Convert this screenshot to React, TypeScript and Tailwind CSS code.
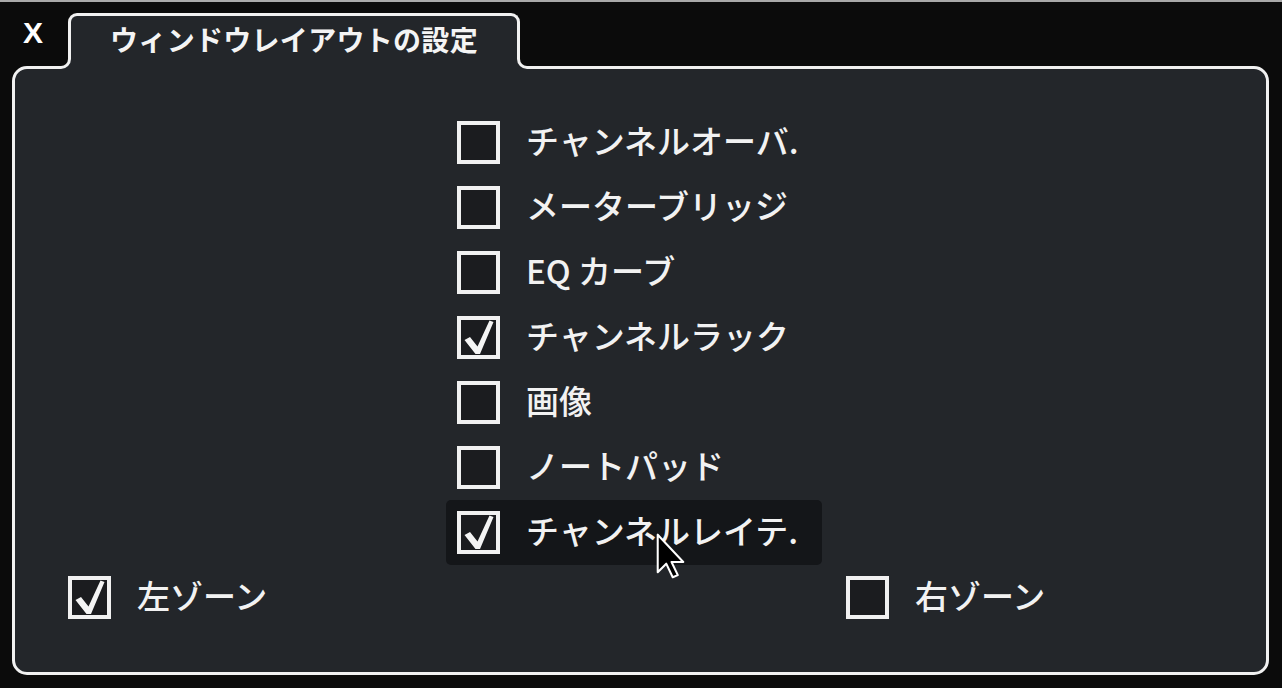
import React from 'react';

type Item = { label: string; checked: boolean; hover?: boolean };

const items: Item[] = [
  { label: 'チャンネルオーバ.', checked: false },
  { label: 'メーターブリッジ', checked: false },
  { label: 'EQ カーブ', checked: false },
  { label: 'チャンネルラック', checked: true },
  { label: '画像', checked: false },
  { label: 'ノートパッド', checked: false },
  { label: 'チャンネルレイテ.', checked: true, hover: true },
];

const Box: React.FC<{ checked: boolean }> = ({ checked }) => (
  <div className="w-[43px] h-[43px] shrink-0 border-[4px] border-[#f1f1f1] bg-[#1b1c1f]">
    {checked && (
      <svg viewBox="0 0 35 35" className="w-full h-full">
        <path d="M3.5 20 L9 17 L16.5 26.5 L28.5 0.5 L32.5 2 L19 34 L14.5 34 Z" fill="#f4f4f4" />
      </svg>
    )}
  </div>
);

const Label: React.FC<{ children: React.ReactNode }> = ({ children }) => (
  <span className="text-[33px] font-medium leading-none text-[#f2f2f2] whitespace-nowrap pb-[5px]">{children}</span>
);

const Row: React.FC<{ item: Item }> = ({ item }) => (
  <div
    className={`h-[65px] w-[376px] px-[11px] flex items-center gap-[26px] rounded-[5px] ${
      item.hover ? 'bg-[#141619]' : ''
    }`}
  >
    <Box checked={item.checked} />
    <Label>{item.label}</Label>
  </div>
);

// macOS style arrow pointer
const Pointer = () => (
  <svg width="29" height="46" viewBox="0 0 17 27" className="absolute left-[641px] top-[464px]">
    <path
      d="M1 1 L1 23 L6 18 L9.8 26 L12.8 24.7 L9.1 17 L16 17 Z"
      fill="#000"
      stroke="#fff"
      strokeWidth="1.2"
      strokeLinejoin="round"
    />
  </svg>
);

export default function App() {
  return (
    <div className="w-[1282px] h-[688px] bg-[#0b0b0b] border-t-2 border-[#a9a9a9] overflow-hidden font-['Noto_Sans_CJK_JP',sans-serif]">
      {/* header strip with close button and tab */}
      <div className="h-[64px] flex items-end">
        <div className="w-[68px] self-stretch flex items-center pl-[23px] pb-[2px]">
          <span className="font-['Liberation_Sans',sans-serif] font-bold text-[30px] leading-none text-white">X</span>
        </div>
        <div className="relative z-10 w-[452px] h-[56px] -mb-[3px] border-t-[3px] border-x-[3px] border-[#f1f1f1] rounded-t-[9px] bg-[#23262a] flex items-center justify-center pb-[8px]">
          <div className="absolute -left-[14px] bottom-0 w-[14px] h-[14px] bg-[#23262a]" />
          <div className="absolute -left-[14px] bottom-0 w-[14px] h-[14px] bg-[#0b0b0b] border-r-[3px] border-b-[3px] border-[#f1f1f1] rounded-br-[10px]" />
          <div className="absolute left-full bottom-0 w-[14px] h-[14px] bg-[#23262a]" />
          <div className="absolute left-full bottom-0 w-[14px] h-[14px] bg-[#0b0b0b] border-l-[3px] border-b-[3px] border-[#f1f1f1] rounded-bl-[10px]" />
          <span className="text-[28px] font-bold leading-none text-[#f4f4f4] tracking-[0.3px]">ウィンドウレイアウトの設定</span>
        </div>
      </div>

      {/* settings panel */}
      <div className="relative ml-[12px] w-[1257px] h-[609px] border-[3px] border-[#f1f1f1] rounded-[15px] bg-[#23262a] pt-[41px]">
        <div className="ml-[431px] flex flex-col">
          {items.map((it) => (
            <Row key={it.label} item={it} />
          ))}
        </div>
        <div className="flex pl-[53px]">
          <div className="w-[778px] h-[65px] flex items-center gap-[26px]">
            <Box checked />
            <Label>左ゾーン</Label>
          </div>
          <div className="h-[65px] flex items-center gap-[26px]">
            <Box checked={false} />
            <Label>右ゾーン</Label>
          </div>
        </div>
        <Pointer />
      </div>
    </div>
  );
}
